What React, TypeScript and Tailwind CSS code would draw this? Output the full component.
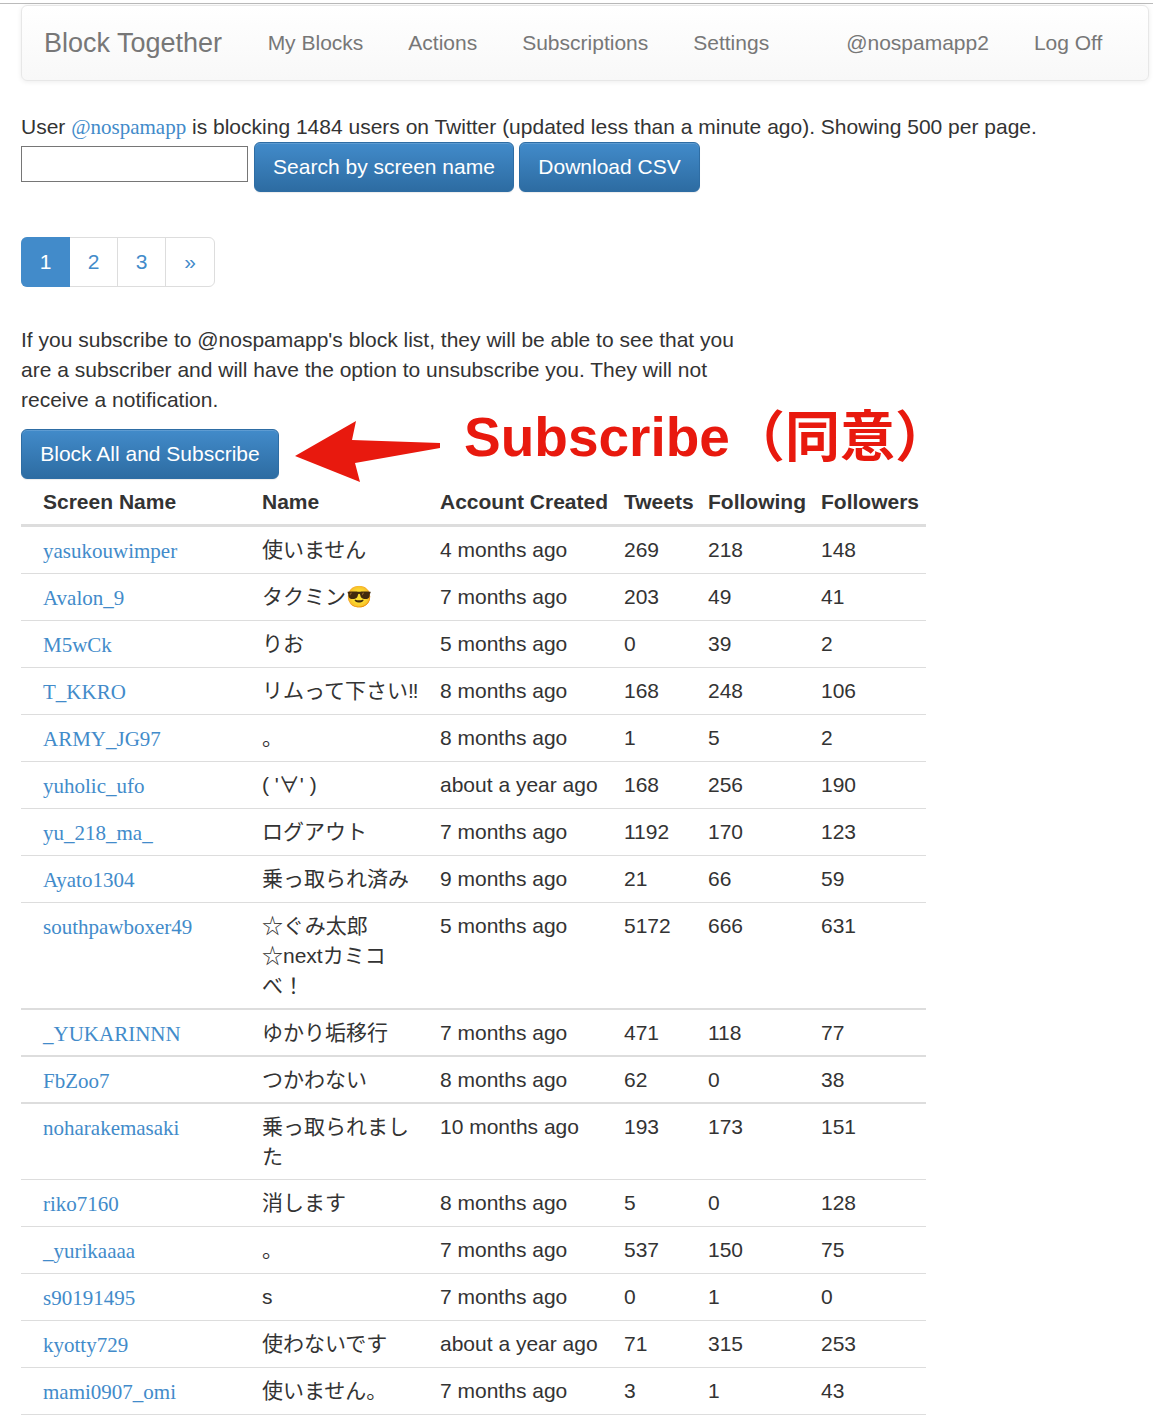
const users: [string, string, string, string, string, string][] = [
  ['yasukouwimper', '使いません', '4 months ago', '269', '218', '148'],
  ['Avalon_9', 'タクミン😎', '7 months ago', '203', '49', '41'],
  ['M5wCk', 'りお', '5 months ago', '0', '39', '2'],
  ['T_KKRO', 'リムって下さい‼', '8 months ago', '168', '248', '106'],
  ['ARMY_JG97', '。', '8 months ago', '1', '5', '2'],
  ['yuholic_ufo', "( '∀' )", 'about a year ago', '168', '256', '190'],
  ['yu_218_ma_', 'ログアウト', '7 months ago', '1192', '170', '123'],
  ['Ayato1304', '乗っ取られ済み', '9 months ago', '21', '66', '59'],
  ['southpawboxer49', '☆ぐみ太郎\n☆nextカミコ\nべ！', '5 months ago', '5172', '666', '631'],
  ['_YUKARINNN', 'ゆかり垢移行', '7 months ago', '471', '118', '77'],
  ['FbZoo7', 'つかわない', '8 months ago', '62', '0', '38'],
  ['noharakemasaki', '乗っ取られました', '10 months ago', '193', '173', '151'],
  ['riko7160', '消します', '8 months ago', '5', '0', '128'],
  ['_yurikaaaa', '。', '7 months ago', '537', '150', '75'],
  ['s90191495', 's', '7 months ago', '0', '1', '0'],
  ['kyotty729', '使わないです', 'about a year ago', '71', '315', '253'],
  ['mami0907_omi', '使いません。', '7 months ago', '3', '1', '43'],
];

// these rows have a heavier rule under them in the screenshot
const thickRows = ['southpawboxer49', '_YUKARINNN', 'FbZoo7'];
// one pixel shorter than the 2-line height would give
const tightRows = [...thickRows, 'noharakemasaki'];

const blueButton =
  'rounded-[6px] border border-[#2e6da4] bg-gradient-to-b from-[#428bca] to-[#2d6ca2] text-white text-[21px] leading-[30px] shadow-[inset_0_1px_0_rgba(255,255,255,0.15),0_1px_1px_rgba(0,0,0,0.075)]';
const navLink = 'px-[22.5px] text-[#777] text-[21px] leading-[30px]';
const serif = "font-['Liberation_Serif','Noto_Sans_CJK_JP',serif]";

export default function App() {
  return (
    <div className="min-h-[1423px] overflow-hidden bg-white text-[21px] leading-[30px] text-[#333] font-['Liberation_Sans','Noto_Sans_CJK_JP',sans-serif]">
      <div className="h-[4px] border-b border-[#bbb]" />
      <div className="pl-[21px] pr-[4px] pt-[1px]">
        <nav className="flex h-[76px] items-center rounded-[6px] border border-[#e7e7e7] bg-gradient-to-b from-white to-[#f8f8f8] pl-[22px] shadow-[0_1px_5px_rgba(0,0,0,0.075)]">
          <span className="mr-[23px] text-[27px] leading-[30px] text-[#777]">Block Together</span>
          <a className={navLink}>My Blocks</a>
          <a className={navLink}>Actions</a>
          <a className={navLink}>Subscriptions</a>
          <a className={navLink}>Settings</a>
          <a className={`${navLink} ml-[32px]`}>@nospamapp2</a>
          <a className={navLink}>Log Off</a>
        </nav>
      </div>

      <main className="pl-[21px]">
        <p className="mt-[31px] whitespace-nowrap">
          User <a className={`${serif} text-[#428bca]`}>@nospamapp</a> is blocking 1484 users on Twitter (updated less than a minute ago). Showing 500 per page.
        </p>
        <div className="flex items-start">
          <input className="mt-[4px] h-[36px] w-[227px] border border-[#767676] bg-white" />
          <button className={`${blueButton} ml-[6px] h-[50px] w-[260px]`}>Search by screen name</button>
          <button className={`${blueButton} ml-[5px] h-[50px] w-[181px]`}>Download CSV</button>
        </div>

        <div className="mt-[45px] flex h-[50px] w-[194px] rounded-[6px] border border-[#ddd] text-[#428bca]">
          <span className="-my-px -ml-px flex w-[49px] items-center justify-center rounded-l-[6px] bg-[#428bca] text-white">1</span>
          <span className="flex w-[48px] items-center justify-center border-r border-[#ddd]">2</span>
          <span className="flex w-[48px] items-center justify-center border-r border-[#ddd]">3</span>
          <span className="flex flex-1 items-center justify-center">»</span>
        </div>

        <p className="mt-[38px] w-[730px]">
          If you subscribe to @nospamapp's block list, they will be able to see that you are a subscriber and will have the option to unsubscribe you. They will not receive a notification.
        </p>

        <div className="mt-[14px] flex h-[50px] items-start">
          <button className={`${blueButton} h-[50px] w-[258px]`}>Block All and Subscribe</button>
          <svg className="ml-[16px] mt-[-9px] shrink-0" width="146" height="62" viewBox="0 0 146 62">
            <path d="M0 36 L61 1 L57 20 L145 23 L145 28 L60 43 L65 62 Z" fill="#e8190e" />
          </svg>
          <span className="ml-[23px] mt-[-26px] whitespace-nowrap text-[55px] font-bold leading-[68px] text-[#e8190e]">Subscribe（同意）</span>
        </div>

        <table className="w-[905px] table-fixed border-collapse">
          <thead>
            <tr className="h-[46px] border-b-[3px] border-[#ddd] text-left">
              <th className="w-[241px] pl-[22px] pt-[2px] font-bold">Screen Name</th>
              <th className="w-[178px] pt-[2px] font-bold">Name</th>
              <th className="w-[184px] pt-[2px] font-bold">Account Created</th>
              <th className="w-[84px] pt-[2px] font-bold">Tweets</th>
              <th className="w-[113px] pt-[2px] font-bold">Following</th>
              <th className="pt-[2px] font-bold">Followers</th>
            </tr>
          </thead>
          <tbody>
            {users.map(([screenName, name, created, tweets, following, followers]) => {
              const thick = thickRows.includes(screenName);
              const pb = tightRows.includes(screenName) ? 'pb-[7px]' : 'pb-[8px]';
              return (
                <tr key={screenName} className={`align-top border-[#ddd] ${thick ? 'border-b-[2px]' : 'border-b'}`}>
                  <td className={`${serif} pb-[6px] pl-[22px] pt-[9px] text-[#428bca]`}>{screenName}</td>
                  <td className={`whitespace-pre-line pr-[18px] pt-[8px] ${pb}`}>{name}</td>
                  <td className={`pt-[8px] ${pb}`}>{created}</td>
                  <td className={`pt-[8px] ${pb}`}>{tweets}</td>
                  <td className={`pt-[8px] ${pb}`}>{following}</td>
                  <td className={`pt-[8px] ${pb}`}>{followers}</td>
                </tr>
              );
            })}
          </tbody>
        </table>
      </main>
    </div>
  );
}
